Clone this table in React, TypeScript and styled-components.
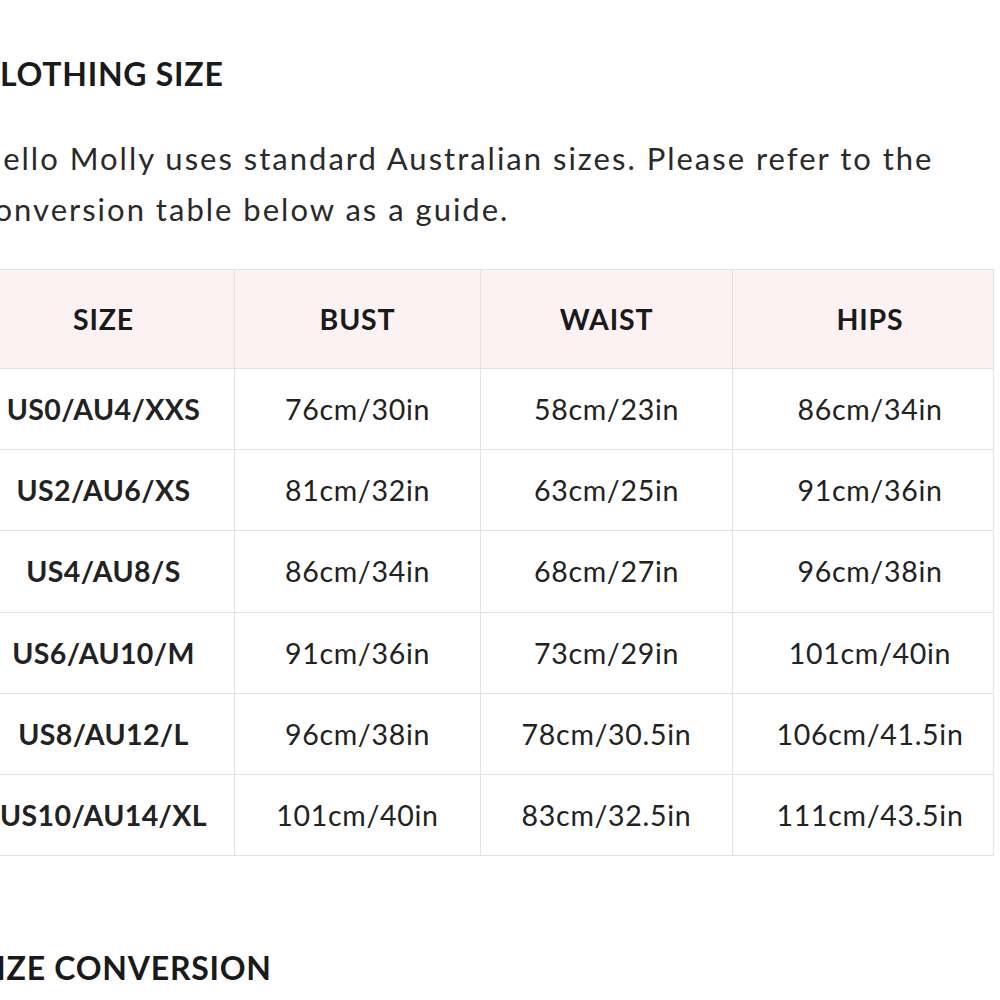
import React from 'react';
import styled, { createGlobalStyle } from 'styled-components';

const GlobalStyle = createGlobalStyle`
  html, body {
    margin: 0;
    padding: 0;
    background: #ffffff;
    overflow: hidden;
  }
  body {
    font-family: Lato, "Open Sans", sans-serif;
    color: #222222;
  }
`;

const rows = [
  { size: 'US0/AU4/XXS', bust: '76cm/30in', waist: '58cm/23in', hips: '86cm/34in' },
  { size: 'US2/AU6/XS', bust: '81cm/32in', waist: '63cm/25in', hips: '91cm/36in' },
  { size: 'US4/AU8/S', bust: '86cm/34in', waist: '68cm/27in', hips: '96cm/38in' },
  { size: 'US6/AU10/M', bust: '91cm/36in', waist: '73cm/29in', hips: '101cm/40in' },
  { size: 'US8/AU12/L', bust: '96cm/38in', waist: '78cm/30.5in', hips: '106cm/41.5in' },
  { size: 'US10/AU14/XL', bust: '101cm/40in', waist: '83cm/32.5in', hips: '111cm/43.5in' },
];

// offset nudges the centred text: positive to the right, negative to the left
const App: React.FC = () => (
  <>
    <GlobalStyle />
    <Page>
      <Heading>CLOTHING SIZE</Heading>
      <Intro>
        Hello Molly uses standard Australian sizes. Please refer to the conversion table below as a
        guide.
      </Intro>
      <SizeTable>
        <colgroup>
          <col style={{ width: 256 }} />
          <col style={{ width: 246 }} />
          <col style={{ width: 252 }} />
          <col style={{ width: 261 }} />
        </colgroup>
        <thead>
          <tr>
            <HeadCell offset={-6}>SIZE</HeadCell>
            <HeadCell>BUST</HeadCell>
            <HeadCell>WAIST</HeadCell>
            <HeadCell offset={14}>HIPS</HeadCell>
          </tr>
        </thead>
        <tbody>
          {rows.map((row) => (
            <tr key={row.size}>
              <Cell bold offset={-6}>
                {row.size}
              </Cell>
              <Cell>{row.bust}</Cell>
              <Cell>{row.waist}</Cell>
              <Cell offset={14}>{row.hips}</Cell>
            </tr>
          ))}
        </tbody>
      </SizeTable>
      <SecondHeading>SIZE CONVERSION</SecondHeading>
    </Page>
  </>
);

export default App;

const Page = styled.div`
  margin-left: -22px;
  padding-top: 54px;
  width: 1100px;
`;

const Heading = styled.h2`
  margin: 0;
  font-size: 32px;
  line-height: 40px;
  font-weight: 700;
  color: #1a1a1a;
  letter-spacing: 0.75px;
`;

const SecondHeading = styled(Heading)`
  margin-top: 92px;
`;

const Intro = styled.p`
  margin: 39px 0 0;
  width: 990px;
  font-size: 31px;
  line-height: 51px;
  letter-spacing: 2px;
  color: #2a2a2a;
`;

const SizeTable = styled.table`
  margin-top: 34px;
  border-collapse: collapse;
  table-layout: fixed;
  width: 1015px;
  border-top: 1px solid #e2e2e2;
`;

const nudge = (offset = 0) =>
  offset >= 0 ? `0 0 0 ${offset}px` : `0 ${-offset}px 0 0`;

const HeadCell = styled.th<{ offset?: number }>`
  height: 98px;
  padding: ${({ offset }) => nudge(offset)};
  background: #fcf1f3;
  border: 1px solid #e2e2e2;
  border-top: none;
  font-size: 28.5px;
  font-weight: 700;
  letter-spacing: 0.8px;
  color: #1a1a1a;
  text-align: center;
`;

const Cell = styled.td<{ bold?: boolean; offset?: number }>`
  height: 80.2px;
  padding: ${({ offset }) => nudge(offset)};
  border: 1px solid #e2e2e2;
  font-size: 28.5px;
  font-weight: ${({ bold }) => (bold ? 700 : 400)};
  letter-spacing: ${({ bold }) => (bold ? '0.4px' : '0.7px')};
  color: #222222;
  text-align: center;
`;
